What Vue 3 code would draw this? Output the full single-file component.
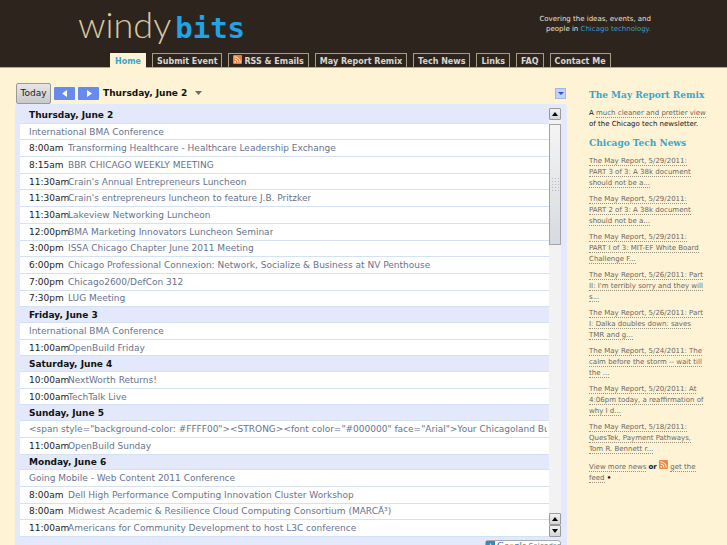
<script setup>
const tabs = [
  { label: 'Home', active: true },
  { label: 'Submit Event' },
  { label: 'RSS & Emails', feed: true },
  { label: 'May Report Remix' },
  { label: 'Tech News' },
  { label: 'Links' },
  { label: 'FAQ' },
  { label: 'Contact Me' },
]

const days = [
  {
    name: 'Thursday, June 2',
    events: [
      ['', 'International BMA Conference'],
      ['8:00am', 'Transforming Healthcare - Healthcare Leadership Exchange'],
      ['8:15am', 'BBR CHICAGO WEEKLY MEETING'],
      ['11:30am', "Crain's Annual Entrepreneurs Luncheon"],
      ['11:30am', "Crain's entrepreneurs luncheon to feature J.B. Pritzker"],
      ['11:30am', 'Lakeview Networking Luncheon'],
      ['12:00pm', 'BMA Marketing Innovators Luncheon Seminar'],
      ['3:00pm', 'ISSA Chicago Chapter June 2011 Meeting'],
      ['6:00pm', 'Chicago Professional Connexion: Network, Socialize & Business at NV Penthouse'],
      ['7:00pm', 'Chicago2600/DefCon 312'],
      ['7:30pm', 'LUG Meeting'],
    ],
  },
  {
    name: 'Friday, June 3',
    events: [
      ['', 'International BMA Conference'],
      ['11:00am', 'OpenBuild Friday'],
    ],
  },
  {
    name: 'Saturday, June 4',
    events: [
      ['10:00am', 'NextWorth Returns!'],
      ['10:00am', 'TechTalk Live'],
    ],
  },
  {
    name: 'Sunday, June 5',
    events: [
      ['', '<span style="background-color: #FFFF00"><STRONG><font color="#000000" face="Arial">Your Chicagoland Bu'],
      ['11:00am', 'OpenBuild Sunday'],
    ],
  },
  {
    name: 'Monday, June 6',
    events: [
      ['', 'Going Mobile - Web Content 2011 Conference'],
      ['8:00am', 'Dell High Performance Computing Innovation Cluster Workshop'],
      ['8:00am', 'Midwest Academic & Resilience Cloud Computing Consortium (MARCÂ³)'],
      ['11:00am', 'Americans for Community Development to host L3C conference'],
    ],
  },
]

const news = [
  'The May Report, 5/29/2011: PART 3 of 3: A 38k document should not be a...',
  'The May Report, 5/29/2011: PART 2 of 3: A 38k document should not be a...',
  'The May Report, 5/29/2011: PART I of 3: MIT-EF White Board Challenge F...',
  "The May Report, 5/26/2011: Part II: I'm terribly sorry and they will s...",
  'The May Report, 5/26/2011: Part I: Dalka doubles down: saves TMR and g...',
  'The May Report, 5/24/2011: The calm before the storm -- wait till the ...',
  'The May Report, 5/20/2011: At 4:06pm today, a reaffirmation of why I d...',
  'The May Report, 5/18/2011: QuesTek, Payment Pathways, Tom R. Bennett r...',
]
</script>

<template>
  <div class="page">
    <header class="masthead">
      <div class="brand">
        <a class="logo" href="#"><span class="windy">windy</span><span class="bits">bits</span></a>
        <p class="tagline">Covering the ideas, events, and<br />people in <a href="#">Chicago technology.</a></p>
      </div>
      <nav class="tabs">
        <a v-for="tab in tabs" :key="tab.label" href="#" :class="['tab', { active: tab.active }]">
          <svg v-if="tab.feed" class="feed" viewBox="0 0 9 9" aria-hidden="true">
            <rect width="9" height="9" rx="1" fill="#ee7f35" />
            <circle cx="2.3" cy="6.8" r="0.9" fill="#fff" />
            <path d="M1.5 4a3.5 3.5 0 0 1 3.5 3.6M1.5 1.8a5.8 5.8 0 0 1 5.8 5.8" fill="none" stroke="#fff" />
          </svg>{{ tab.label }}
        </a>
      </nav>
    </header>

    <div class="columns">
      <main class="calendar">
        <div class="toolbar">
          <button class="today" type="button">Today</button>
          <button class="step" type="button" aria-label="Previous">
            <svg viewBox="0 0 21 13"><path d="M13 3v7L8 6.500z" fill="#fff" /></svg>
          </button>
          <button class="step" type="button" aria-label="Next">
            <svg viewBox="0 0 21 13"><path d="M9 3v7l5-3.500z" fill="#fff" /></svg>
          </button>
          <button class="date" type="button">
            Thursday, June 2
            <svg viewBox="0 0 8 4"><path d="M0 0h7L3.500 4z" fill="#6f6b68" /></svg>
          </button>
          <button class="options" type="button" aria-label="Options">
            <svg viewBox="0 0 9 9"><path d="M2 3h6L5 6z" fill="#2c57d0" /></svg>
          </button>
        </div>

        <div class="panel">
          <div class="viewport">
            <div class="agenda">
              <template v-for="day in days" :key="day.name">
                <h2 class="day">{{ day.name }}</h2>
                <div v-for="(event, i) in day.events" :key="day.name + i" class="event">
                  <span v-if="event[0]" class="time">{{ event[0] }}</span>
                  <a href="#">{{ event[1] }}</a>
                </div>
              </template>
            </div>
            <div class="scrollbar">
              <button class="arrow" type="button" aria-label="Scroll up">
                <svg viewBox="0 0 6 4"><path d="M0 4h6L3 0z" /></svg>
              </button>
              <div class="track">
                <div class="thumb"><i class="grip"></i></div>
              </div>
              <button class="arrow" type="button" aria-label="Scroll page up">
                <svg viewBox="0 0 6 4"><path d="M0 4h6L3 0z" /></svg>
              </button>
              <button class="arrow" type="button" aria-label="Scroll down">
                <svg viewBox="0 0 6 4"><path d="M0 0h6L3 4z" /></svg>
              </button>
            </div>
          </div>
          <div class="footer">
            <a class="badge" href="#">
              <span class="plus">+</span>
              <span class="google"><b class="b">G</b><b class="r">o</b><b class="y">o</b><b class="b">g</b><b class="g">l</b><b class="r">e</b></span>
              <span class="word">Calendar</span>
            </a>
          </div>
        </div>
      </main>

      <aside class="sidebar">
        <h3>The May Report Remix</h3>
        <p class="intro">A <a href="#">much cleaner and prettier view</a><br />of the Chicago tech newsletter.</p>
        <h3>Chicago Tech News</h3>
        <p v-for="item in news" :key="item"><a href="#">{{ item }}</a></p>
        <p>
          <a href="#">View more news</a> <b>or</b> <svg class="feed" viewBox="0 0 9 9" aria-hidden="true">
            <rect width="9" height="9" rx="1" fill="#f08a3c" />
            <circle cx="2.3" cy="6.8" r="0.9" fill="#fff" />
            <path d="M1.5 4a3.5 3.5 0 0 1 3.5 3.6M1.5 1.8a5.8 5.8 0 0 1 5.8 5.8" fill="none" stroke="#fff" />
          </svg> <a href="#">get the feed</a> <b>•</b>
        </p>
      </aside>
    </div>
  </div>
</template>

<style>
body {
  margin: 0;
  background: #fff3d6;
}
</style>

<style scoped>
* {
  box-sizing: border-box;
}
.page {
  height: 100vh;
  overflow: hidden;
  background: #fff3d6;
  color: #111;
  font-family: "DejaVu Sans", sans-serif;
  font-size: 9px;
}
a {
  color: inherit;
  text-decoration: none;
}
button {
  margin: 0;
  padding: 0;
  border: 0;
  background: none;
  color: inherit;
  font: inherit;
}
svg {
  display: block;
}
h2,
h3,
p {
  margin: 0;
}
.masthead {
  background: #2d251d;
  border-bottom: 1px solid #b5a98a;
}
.brand {
  display: flex;
  justify-content: space-between;
  height: 53px;
  padding: 0 76px 0 78px;
}
.logo {
  display: flex;
  align-items: baseline;
  gap: 4px;
  line-height: 48px;
}
.windy {
  color: #d9c9a3;
  font-family: Lato, sans-serif;
  font-size: 36px;
  font-weight: 300;
}
.bits {
  color: #21a3e6;
  font-family: "DejaVu Sans Mono", monospace;
  font-size: 29px;
  font-weight: 700;
}
.tagline {
  padding-top: 14px;
  color: #e6e0d6;
  font-size: 7px;
  line-height: 10px;
  text-align: right;
}
.tagline a {
  color: #2f9fcb;
}
.tabs {
  display: flex;
  gap: 6px;
  padding-left: 110px;
}
.tab {
  display: flex;
  gap: 2px;
  height: 14px;
  padding: 0 4px;
  border: 1px solid #a89d80;
  border-bottom: 0;
  color: #d9d5ce;
  font-size: 8px;
  font-weight: 700;
  line-height: 15px;
  white-space: nowrap;
}
.tab.active {
  margin-bottom: -1px;
  height: 15px;
  border-color: #fff3d6;
  background: #fff3d6;
  color: #37a6cc;
}
.feed {
  width: 9px;
  height: 9px;
}
.tab .feed {
  margin-top: 1px;
}
.columns {
  display: grid;
  grid-template-columns: minmax(0, 1fr) 116px;
  gap: 22px;
  padding: 14px 22px 0 15px;
}
.toolbar {
  display: flex;
  align-items: center;
  height: 22px;
  padding: 0 1px;
}
.today {
  width: 35px;
  height: 21px;
  border: 1px solid #999;
  border-radius: 2px;
  background: linear-gradient(#e6e6e6, #c9c9cc);
  color: #222;
}
.step {
  width: 21px;
  height: 13px;
  margin-left: 3px;
  border-radius: 1px;
  background: #668aee;
}
.date {
  display: flex;
  align-items: center;
  gap: 8px;
  margin-left: 4px;
  font-weight: 700;
}
.date svg {
  width: 8px;
  height: 4px;
}
.options {
  width: 11px;
  height: 11px;
  margin-left: auto;
  border: 1px solid #a3b6ea;
  background: #c3d2f7;
}
.panel {
  padding: 4px 6px 20px 5px;
  border-radius: 3px 3px 0 0;
  background: #e3e9fa;
}
.viewport {
  display: flex;
  height: 429px;
}
.agenda {
  display: flex;
  flex: 1;
  flex-direction: column;
  min-width: 0;
}
.day,
.event {
  display: flex;
  align-items: center;
  min-height: 0;
  padding-left: 9px;
  border-bottom: 1px solid #d3e1f3;
  overflow: hidden;
  white-space: nowrap;
}
.day {
  flex: 15 1 0;
  font-size: 9px;
  font-weight: 700;
}
.event {
  flex: 16 1 0;
  padding-right: 2px;
  background: #fff;
}
.time {
  flex: none;
  width: 39px;
  color: #222;
}
.event a {
  min-width: 0;
  overflow: hidden;
  color: #667391;
}
.scrollbar {
  display: flex;
  flex-direction: column;
  width: 12px;
}
.arrow {
  display: grid;
  place-items: center;
  height: 12px;
  border: 1px solid #999;
  border-radius: 1px;
  background: linear-gradient(#f3f3f3, #d3d5d9);
}
.arrow svg {
  width: 6px;
  height: 4px;
}
.track {
  flex: 1;
  padding-top: 4px;
  background: #f2f2f2;
}
.thumb {
  display: grid;
  place-items: center;
  height: 121px;
  border: 1px solid #a3a3a3;
  background: linear-gradient(#f4f4f4, #d6dae0);
}
.grip {
  width: 9px;
  height: 15px;
  background: radial-gradient(circle, #b5b8bd 1px, transparent 1px) 0 0 / 3px 3px;
}
.footer {
  display: flex;
  justify-content: flex-end;
  padding-top: 3px;
}
.badge {
  display: flex;
  align-items: center;
  gap: 2px;
  width: 76px;
  height: 12px;
  border: 1px solid #a5abb5;
  border-radius: 3px;
  background: #fff;
  font-size: 7px;
  line-height: 10px;
}
.plus {
  width: 10px;
  height: 10px;
  background: #3b86bb;
  color: #fff;
  font-weight: 700;
  text-align: center;
}
.google {
  font-family: "Liberation Serif", serif;
  font-size: 10px;
}
.google b {
  font-weight: 400;
}
.b {
  color: #2a56c6;
}
.r {
  color: #d23c2a;
}
.y {
  color: #e8ad1c;
}
.g {
  color: #2c9a42;
}
.word {
  color: #777;
}
.sidebar {
  padding-top: 7px;
  font-size: 7px;
  line-height: 11px;
}
.sidebar h3 {
  margin-bottom: 6px;
  color: #37a6cc;
  font-family: "DejaVu Serif", serif;
  font-size: 9px;
  line-height: 13px;
  white-space: nowrap;
}
.sidebar p {
  margin-bottom: 5px;
}
.sidebar .intro {
  margin-bottom: 7px;
  white-space: nowrap;
}
.sidebar a {
  border-bottom: 1px dotted #9a9280;
  color: #6b675e;
}
.sidebar .feed {
  display: inline-block;
}
</style>
